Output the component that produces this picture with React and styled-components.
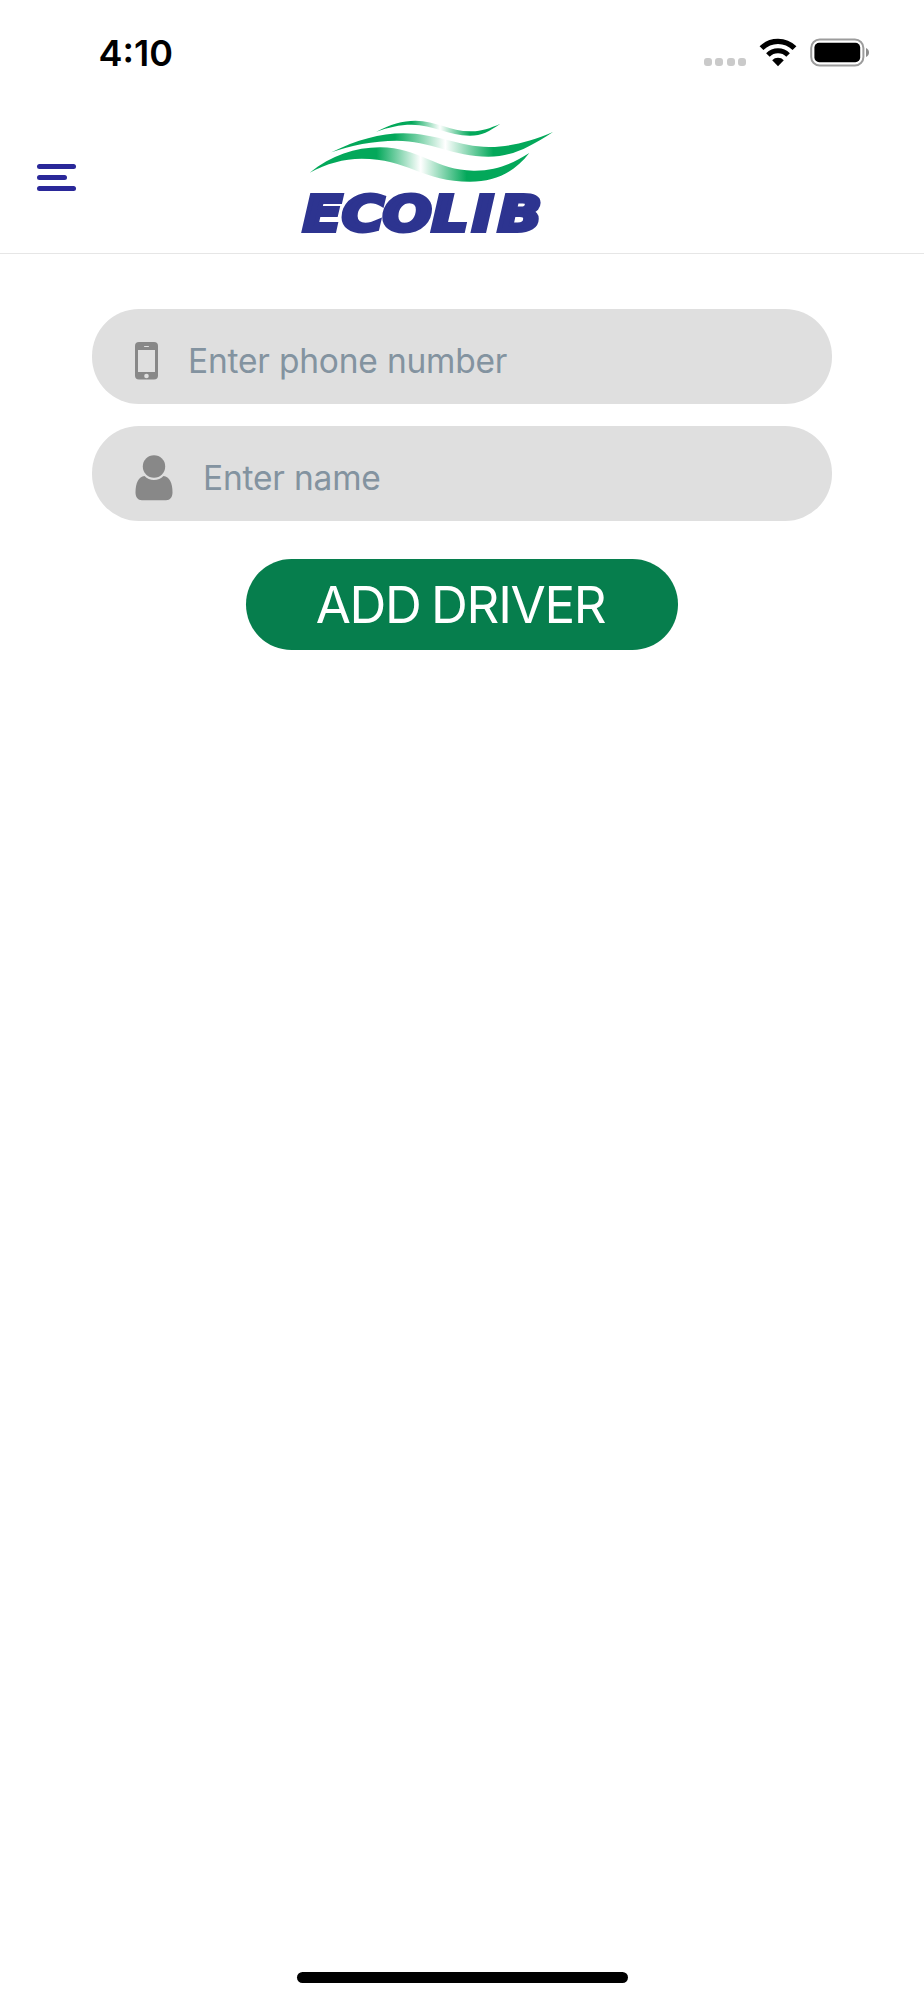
import styled, { createGlobalStyle } from "styled-components";

const WifiIcon = () => (
  <svg width="38" height="29" viewBox="0 0 38 29" fill="none">
    <path d="M2.5 10.2a23.3 23.3 0 0 1 33 0" stroke="#000" strokeWidth="5.4" />
    <path d="M8.9 17a14.2 14.2 0 0 1 20.2 0" stroke="#000" strokeWidth="5" />
    <path d="M13.2 22.3a8 8 0 0 1 11.6 0L19 28.200z" fill="#000" />
  </svg>
);

const BatteryIcon = () => (
  <svg width="60" height="29" viewBox="0 0 60 29">
    <rect
      x="1.2"
      y="1.5"
      width="52.2"
      height="26"
      rx="8.5"
      fill="none"
      stroke="#9c9c9c"
      strokeWidth="2"
    />
    <rect x="4.4" y="4.800" width="45.800" height="19.400" rx="4.800" />
    <path d="M56 10c1.8.8 3 2.500 3 4.500s-1.200 3.700-3 4.500z" fill="#8c8c8c" />
  </svg>
);

const PhoneIcon = () => (
  <svg width="23" height="38" viewBox="0 0 23 38">
    <rect width="23" height="37.600" rx="4" fill="#888" />
    <rect x="3" y="8" width="17" height="22" fill="#dfdfdf" />
    <rect x="9" y="4" width="5" height="1" rx=".5" fill="#dfdfdf" />
    <circle cx="11.500" cy="34" r="2.300" fill="#dfdfdf" />
  </svg>
);

const PersonIcon = () => (
  <svg width="38" height="46" viewBox="0 0 38 46" fill="#888">
    <circle cx="19" cy="11.500" r="11.200" />
    <path d="M9.500 21C12 23.600 15.200 25 19 25s7-1.400 9.500-4C34.500 21.500 37.500 28 37.500 37.500c0 4.500-2.300 7.700-6.500 7.700H7C2.800 45.200.5 42 .5 37.500.5 28 3.500 21.500 9.500 21z" />
  </svg>
);

const Fade = ({ id, from, middle, to }) => (
  <linearGradient id={id} gradientUnits="userSpaceOnUse" x1={from} x2={to}>
    <stop offset="0" stopColor="#03a85a" />
    <stop offset={(middle - from) / (to - from)} stopColor="#fff" />
    <stop offset="1" stopColor="#03a85a" />
  </linearGradient>
);

const Logo = () => (
  <LogoSvg viewBox="0 25 840 390">
    <defs>
      <Fade id="waveTop" from={365} middle={450} to={540} />
      <Fade id="waveMiddle" from={315} middle={466} to={610} />
      <Fade id="waveBottom" from={260} middle={392} to={530} />
    </defs>
    <path
      fill="url(#waveTop)"
      d="M259 66C300 44 338 33 376 33C440 33 480 66 545 65C575 64 600 56 631 42C598 65 575 78 540 78C475 78 430 45 365 45C328 45 295 53 259 66Z"
    />
    <path
      fill="url(#waveMiddle)"
      d="M124 128C200 91 270 71 340 71C440 71 510 113 600 112C660 111 720 96 789 67C710 119 660 141 595 141C490 141 420 93 320 93C250 93 180 108 124 128Z"
    />
    <path
      fill="url(#waveBottom)"
      d="M59 189C125 137 195 113 270 113C390 113 440 185 555 183C620 182 665 163 718 130C670 191 615 216 540 216C400 216 350 147 215 147C160 147 110 162 59 189Z"
    />
    <LogoText transform="scale(1.16 1)" x="33 134 239 366 471 537" y="364">
      ECOLIB
    </LogoText>
  </LogoSvg>
);

const App = () => {
  return (
    <Screen>
      <GlobalStyle />
      <StatusBar>
        <Time>4:10</Time>
        <StatusIcons>
          <Signal>
            <Dot />
            <Dot />
            <Dot />
            <Dot />
          </Signal>
          <WifiIcon />
          <BatteryIcon />
        </StatusIcons>
      </StatusBar>
      <Header>
        <MenuButton aria-label="Menu">
          <MenuLine />
          <MenuLine $short />
          <MenuLine />
        </MenuButton>
        <Logo />
      </Header>
      <Form onSubmit={(e) => e.preventDefault()}>
        <Field>
          <FieldIcon $top="33px">
            <PhoneIcon />
          </FieldIcon>
          <Input type="tel" placeholder="Enter phone number" />
        </Field>
        <Field>
          <FieldIcon $top="29px">
            <PersonIcon />
          </FieldIcon>
          <Input type="text" placeholder="Enter name" />
        </Field>
        <AddButton type="submit">ADD DRIVER</AddButton>
      </Form>
      <HomeIndicator />
    </Screen>
  );
};
export default App;

const GlobalStyle = createGlobalStyle`
  * {
    box-sizing: border-box;
  }

  body {
    margin: 0;
    background: #fff;
    font-family: Inter, "Liberation Sans", sans-serif;
  }
`;

const Screen = styled.div`
  display: flex;
  flex-direction: column;
  align-items: center;
  width: 924px;
  height: 2000px;
  background: #fff;
`;

const StatusBar = styled.div`
  display: flex;
  justify-content: space-between;
  width: 100%;
  height: 106px;
  padding: 38px 54px 0 98.5px;
`;

const Time = styled.span`
  height: 30px;
  font-size: 36px;
  font-weight: 600;
  line-height: 30px;
`;

const StatusIcons = styled.div`
  display: flex;
  height: 28px;

  & svg {
    flex: none;
  }

  & svg + svg {
    margin-left: 13px;
  }
`;

const Signal = styled.div`
  display: flex;
  align-items: flex-end;
  gap: 3.5px;
  margin-right: 13px;
`;

const Dot = styled.i`
  width: 8px;
  height: 8px;
  border-radius: 3px;
  background: #cacaca;
`;

const Header = styled.header`
  display: flex;
  align-items: flex-start;
  width: 100%;
  height: 148px;
  padding: 12px 37px 0;
  border-bottom: 1px solid #e6e6e6;
`;

const MenuButton = styled.button`
  display: flex;
  flex-direction: column;
  gap: 6px;
  width: 38.5px;
  margin: 46px 214.5px 0 0;
  padding: 0;
  border: 0;
  background: none;
`;

const MenuLine = styled.span`
  width: ${({ $short }) => ($short ? "30px" : "38.5px")};
  height: 5px;
  border-radius: 3px;
  background: #2a2899;
`;

const LogoSvg = styled.svg`
  width: 280px;
  height: 130px;
`;

const LogoText = styled.text`
  fill: #2d3490;
  stroke: #2d3490;
  stroke-width: 12px;
  font-family: "DejaVu Sans", sans-serif;
  font-size: 150px;
  font-style: italic;
  font-weight: 700;
`;

const Form = styled.form`
  display: flex;
  flex: 1;
  flex-direction: column;
  align-items: center;
  width: 100%;
  padding-top: 55px;
`;

const Field = styled.label`
  display: flex;
  width: 740px;
  height: 95px;
  margin-bottom: 21.6px;
  padding: 0 43px;
  border-radius: 47px;
  background: #dfdfdf;
`;

const FieldIcon = styled.span`
  flex: none;
  margin-right: 30px;
  padding-top: ${({ $top }) => $top};
  line-height: 0;
`;

const Input = styled.input`
  flex: 1;
  min-width: 0;
  height: 42px;
  margin-top: 31px;
  padding: 0;
  border: 0;
  outline: 0;
  background: none;
  font-family: inherit;
  font-size: 33.5px;
  letter-spacing: -0.2px;

  &::placeholder {
    color: #8393a0;
    opacity: 1;
  }
`;

const AddButton = styled.button`
  width: 432px;
  height: 91px;
  margin-top: 17px;
  padding: 0 3px 0 0;
  border: 0;
  border-radius: 46px;
  background: #067e4d;
  color: #fff;
  font-family: inherit;
  font-size: 51px;
  letter-spacing: -1.3px;
  word-spacing: -2.5px;
`;

const HomeIndicator = styled.div`
  width: 331px;
  height: 11px;
  margin-bottom: 17px;
  border-radius: 6px;
  background: #000;
`;
